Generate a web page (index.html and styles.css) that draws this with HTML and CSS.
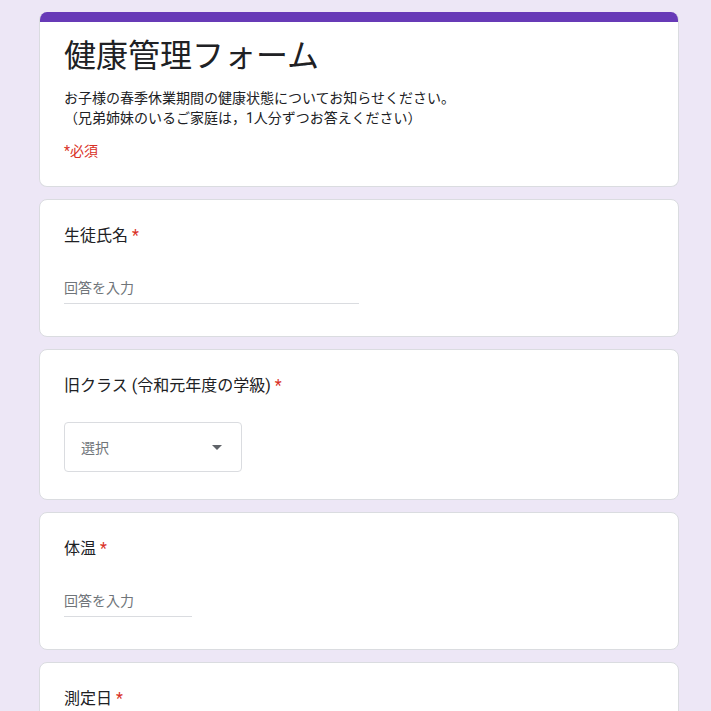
FILE: index.html
```html
<!DOCTYPE html>
<html lang="ja">
<head>
<meta charset="utf-8">
<title>健康管理フォーム</title>
<link rel="stylesheet" href="styles.css">
</head>
<body>
<main class="form">
  <section class="card header-card">
    <div class="accent"></div>
    <div class="header-body">
      <h1 class="title">健康管理フォーム</h1>
      <p class="desc">お子様の春季休業期間の健康状態についてお知らせください。<br>（兄弟姉妹のいるご家庭は，1人分ずつお答えください）</p>
      <p class="required-note">*必須</p>
    </div>
  </section>

  <section class="card question">
    <div class="label">生徒氏名<span class="star">*</span></div>
    <div class="text-input wide">回答を入力</div>
  </section>

  <section class="card question select-q">
    <div class="label">旧クラス (令和元年度の学級)<span class="star">*</span></div>
    <div class="select">
      <span class="select-text">選択</span>
      <svg class="arrow" width="10" height="5" viewBox="0 0 10 5"><path d="M0 0 L10 0 L5 5 Z" fill="#5f6368"/></svg>
    </div>
  </section>

  <section class="card question">
    <div class="label">体温<span class="star">*</span></div>
    <div class="text-input narrow">回答を入力</div>
  </section>

  <section class="card question">
    <div class="label">測定日<span class="star">*</span></div>
    <div class="text-input narrow">回答を入力</div>
  </section>
</main>
</body>
</html>
```

FILE: styles.css
```css
html, body {
  margin: 0;
  padding: 0;
  background: #ede7f6;
}
body {
  font-family: Roboto, "Noto Sans CJK JP", "Noto Sans", sans-serif;
  color: #202124;
}
.form {
  width: 640px;
  padding: 12px 0 0 39px;
  display: flex;
  flex-direction: column;
  gap: 12px;
}
.card {
  background: #fff;
  border: 1px solid #dadce0;
  border-radius: 8px;
  box-sizing: border-box;
  width: 640px;
}
.header-card {
  border-top: none;
  overflow: hidden;
}
.accent {
  height: 10px;
  background: #673ab7;
}
.header-body {
  padding: 11px 24px 25px;
}
.title {
  margin: 0;
  font-size: 32px;
  line-height: 40px;
  font-weight: 400;
  font-family: "Noto Sans CJK JP", sans-serif;
}
.desc {
  margin: 15px 0 0;
  font-size: 14px;
  line-height: 20px;
}
.required-note {
  margin: 13px 0 0;
  font-size: 14px;
  line-height: 20px;
  color: #d93025;
}
.question {
  padding: 24px 24px 24px;
}
.label {
  font-size: 16px;
  line-height: 24px;
  letter-spacing: 0;
}
.star {
  color: #d93025;
  margin-left: 4px;
}
.text-input {
  margin-top: 25px;
  height: 30px;
  line-height: 30px;
  font-size: 14px;
  color: #70757a;
  border-bottom: 1px solid #dadce0;
  margin-bottom: 8px;
}
.text-input.wide { width: 295px; }
.text-input.narrow { width: 128px; }
.select-q {
  padding-bottom: 27px;
}
.select {
  margin-top: 24px;
  width: 178px;
  height: 50px;
  box-sizing: border-box;
  border: 1px solid #dadce0;
  border-radius: 4px;
  display: flex;
  align-items: center;
  justify-content: space-between;
  padding: 0 19px 0 16px;
}
.select-text {
  font-size: 14px;
  color: #70757a;
}
.arrow {
  display: block;
}
```
